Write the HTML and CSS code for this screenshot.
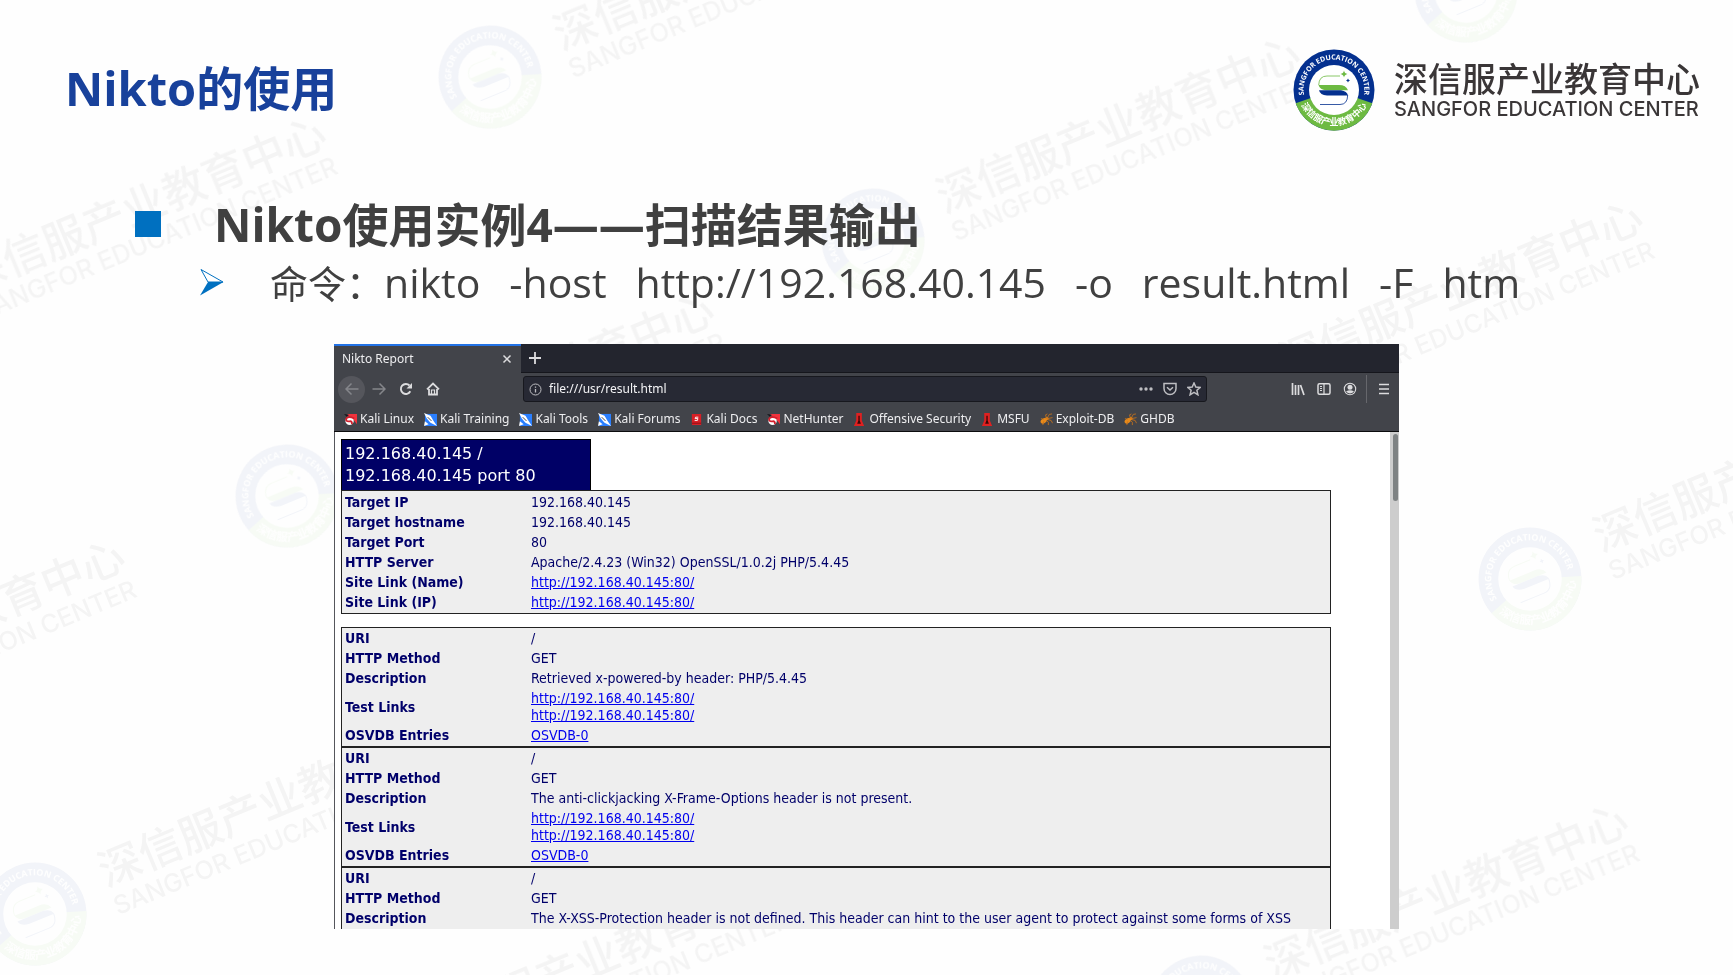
FILE: index.html
```html
<!DOCTYPE html>
<html lang="zh-CN">
<head>
<meta charset="utf-8">
<title>Nikto的使用</title>
<link rel="stylesheet" href="styles.css">
</head>
<body>
<svg class="watermarks" viewBox="0 0 1733 975" preserveAspectRatio="xMidYMid slice" aria-hidden="true">
  <defs>
    <path id="arc-top" d="M12.500 51.500 A30.400 30.400 0 1 1 69.500 51.500"/>
    <path id="arc-bottom" d="M5 46 A36.500 36.500 0 0 0 77 46"/>
    <g id="lockup">
      <circle cx="41" cy="41" r="40.500" fill="#04308f"/>
      <path d="M41 41 L2.700 54.300 A40.500 40.500 0 0 0 79.300 54.300 Z" fill="#6dba42"/>
      <circle cx="41" cy="41" r="25" fill="#fff"/>
      <path d="M47 27 H34 Q26 27 25.700 36" fill="none" stroke="#6dba42" stroke-width=".8"/>
      <path d="M25.500 36 H46 Q53 36 55 41.200 H33 Q27 41 25.500 36 Z" fill="#6dba42"/>
      <path d="M26 41.200 H48 Q54 42 55 46.500 H34 Q27 46 26 41.200 Z" fill="#04308f"/>
      <path d="M54.700 46 Q54.500 55.500 47 55.500 H27" fill="none" stroke="#04308f" stroke-width=".8"/>
      <path d="M51 21.500 Q51.500 24.500 54.500 25 Q51.500 25.500 51 28.500 Q50.500 25.500 47.500 25 Q50.500 24.500 51 21.500 Z" fill="#6dba42"/>
      <path d="M55 29.500 Q55.300 31.200 57 31.500 Q55.300 31.800 55 33.500 Q54.700 31.800 53 31.500 Q54.700 31.200 55 29.500 Z" fill="#04308f"/>
      <text class="ring-en"><textPath href="#arc-top" startOffset="50%">SANGFOR EDUCATION CENTER</textPath></text>
      <text class="ring-cn"><textPath href="#arc-bottom" startOffset="50%">深信服产业教育中心</textPath></text>
      <text class="mark-cn" x="101" y="43">深信服产业教育中心</text>
      <text class="mark-en" x="101" y="67">SANGFOR EDUCATION CENTER</text>
    </g>
    <g id="stamp" transform="rotate(-22.500) scale(1.27) translate(-41 -41)"><use href="#lockup"/></g>
  </defs>
  <g opacity=".05">
    <use href="#stamp" x="490" y="77"/>
    <use href="#stamp" x="873" y="240"/>
    <use href="#stamp" x="1466" y="-9"/>
    <use href="#stamp" x="-101" y="320"/>
    <use href="#stamp" x="287" y="496"/>
    <use href="#stamp" x="1216" y="404"/>
    <use href="#stamp" x="1530" y="579"/>
    <use href="#stamp" x="-302" y="743"/>
    <use href="#stamp" x="35" y="914"/>
    <use href="#stamp" x="352" y="1073"/>
    <use href="#stamp" x="1201" y="1007"/>
  </g>
</svg>

<svg class="sprite" aria-hidden="true">
  <symbol id="i-dragon" viewBox="0 0 14 14">
    <path d="M3 1 H14 V12 L10 7 Z" fill="#f0323c"/><path d="M0 1 L5 2 L3 4 Z" fill="#16161c"/>
    <circle cx="6" cy="8.500" r="4.500" fill="#fff"/><path d="M11 6 Q5 2.500 2.500 6 Q1.500 9.500 6 9 Q9 8.500 8.500 12" fill="none" stroke="#d21f2c" stroke-width="2"/>
  </symbol>
  <symbol id="i-kali" viewBox="0 0 14 14">
    <path d="M1 1 H14 V14 H1 Z" fill="#2a7fff"/><path d="M0 0 L7 3 L10 8 L14 14 L7 10.500 L3 6 Z" fill="#fff"/><path d="M4 4.500 L8 8.500" stroke="#33363f" stroke-width="1"/><path d="M0 14 L1 9 L5 12 Z" fill="#fff"/>
  </symbol>
  <symbol id="i-docs" viewBox="0 0 14 14">
    <path d="M2 1 H12 V13 H3 Q2 13 2 12 Z" fill="#d81f26"/><path d="M2 11 H12" stroke="#8b0d12"/><path d="M9 4.500 H6 L5.500 6 H8.500 L8 8 H5" fill="none" stroke="#fff" stroke-width="1"/>
  </symbol>
  <symbol id="i-tower" viewBox="0 0 14 14">
    <path d="M3.500 0 H9.500 V8 L12 14 H1 L3.500 8 Z" fill="#e02020"/><path d="M5.800 3 H7.200 V8 L8.500 11.500 H4.500 L5.800 8 Z" fill="#3a0606"/>
  </symbol>
  <symbol id="i-spider" viewBox="0 0 14 14">
    <ellipse cx="4" cy="8.500" rx="3.600" ry="2.600" transform="rotate(-35 4 8.500)" fill="#e88a1a"/><circle cx="7.500" cy="6" r="1.800" fill="#e88a1a"/>
    <path d="M7 6 L6 2 L8 1 M7.500 6 L10 1.500 L13 1 M8 6 L13.500 5 M8 7 L12 8 L13.500 11 M6.500 7.500 L9 10 V13 M4 7 L1 6 M4 9 L3 13" fill="none" stroke="#c9731a" stroke-width=".9"/>
  </symbol>
</svg>

<main class="slide">
  <header class="slide-head">
    <h1>Nikto的使用</h1>
    <svg class="brand" viewBox="0 0 410 82" role="img" aria-label="深信服产业教育中心"><use href="#lockup"/></svg>
  </header>

  <section class="points">
    <div class="point"><span class="square"></span><h2>Nikto使用实例4——扫描结果输出</h2></div>
    <div class="subpoint">
      <svg class="arrow" viewBox="0 0 24 28"><path d="M1 1.500 L23 14 L8 14 Z" fill="#fff" stroke="#0070c0" stroke-width="1"/><path d="M0 27.500 L8 14 H23.500 Z" fill="#0070c0"/></svg>
      <p><span><span class="label">命令：</span>nikto</span> <span>-host</span> <span>http://192.168.40.145</span> <span>-o</span> <span>result.html</span> <span>-F</span> <span>htm</span></p>
    </div>
  </section>

  <section class="window">
    <div class="tabs">
      <div class="tab"><span>Nikto Report</span>
        <button class="icon" aria-label="Close tab"><svg width="10" height="10" viewBox="0 0 10 10"><path d="M1.500 1.500 L8.500 8.500 M8.500 1.500 L1.500 8.500"/></svg></button></div>
      <button class="icon plus" aria-label="New tab"><svg width="14" height="14" viewBox="0 0 14 14"><path d="M7 1 V13 M1 7 H13" stroke-width="1.800"/></svg></button>
    </div>

    <div class="toolbar">
      <div class="nav">
        <button class="icon back" aria-label="Back"><svg width="14" height="14" viewBox="0 0 14 14"><path d="M13.500 7 H1 M6.500 1.500 L1 7 L6.500 12.500"/></svg></button>
        <button class="icon dim" aria-label="Forward"><svg width="14" height="14" viewBox="0 0 14 14"><path d="M.5 7 H13 M7.500 1.500 L13 7 L7.500 12.500"/></svg></button>
        <button class="icon" aria-label="Reload"><svg width="14" height="14" viewBox="0 0 14 14"><path d="M11.300 9.300 A5 5 0 1 1 10.500 3.500" stroke-width="1.900"/><path d="M13 1 V6.500 H7.500 Z" fill="#dcdcde" stroke="none"/></svg></button>
        <button class="icon" aria-label="Home"><svg width="14" height="14" viewBox="0 0 14 14"><path d="M1 7.300 L7 1.500 L13 7.300 M3 7 V12.500 H11 V7" stroke-width="1.800"/><path d="M5.500 12.500 V8 H8.500 V12.500" stroke-width="1.200"/></svg></button>
      </div>
      <div class="urlbar">
        <svg class="line info" width="13" height="13" viewBox="0 0 13 13"><circle cx="6.500" cy="6.500" r="5.500" stroke-width="1"/><path d="M6.500 6 V9.500 M6.500 3.400 V4.700" stroke-width="1.300"/></svg>
        <input type="text" value="file:///usr/result.html" aria-label="Address">
        <button class="icon soft" aria-label="Page actions"><svg width="14" height="14" viewBox="0 0 14 14"><g fill="#bebec2" stroke="none"><circle cx="2" cy="7" r="1.700"/><circle cx="7" cy="7" r="1.700"/><circle cx="12" cy="7" r="1.700"/></g></svg></button>
        <button class="icon soft" aria-label="Save to Pocket"><svg width="14" height="14" viewBox="0 0 14 14"><path d="M1 1.500 H13 V6.500 A6 6 0 0 1 1 6.500 Z M4 5.300 L7 8 L10 5.300"/></svg></button>
        <button class="icon soft" aria-label="Bookmark"><svg width="14" height="14" viewBox="0 0 14 14"><path d="M7 1 L8.800 5 L13.200 5.400 L9.900 8.300 L10.900 12.800 L7 10.400 L3.100 12.800 L4.100 8.300 L.8 5.400 L5.200 5 Z"/></svg></button>
      </div>
      <div class="tools">
        <button class="icon" aria-label="Library"><svg width="14" height="14" viewBox="0 0 14 14"><path d="M1.500 1 V13 M4.500 3 V13 M7.500 3 V13 M9.500 3 L13 13" stroke-width="1.700"/></svg></button>
        <button class="icon" aria-label="Sidebars"><svg width="14" height="14" viewBox="0 0 14 14"><rect x="1" y="1.700" width="12" height="10.600" rx="1.500" stroke-width="1.500"/><path d="M7 2 V12 M3 4.500 H5 M3 6.500 H5 M3 8.500 H5" stroke-width="1.200"/></svg></button>
        <button class="icon" aria-label="Account"><svg width="14" height="14" viewBox="0 0 14 14"><circle cx="7" cy="7" r="5.700" stroke-width="1.100"/><circle cx="7" cy="5.300" r="2.500" fill="#dcdcde" stroke="none"/><path d="M3 9.500 Q7 7 11 9.500 Q7 13.500 3 9.500 Z" fill="#dcdcde" stroke="none"/></svg></button>
        <button class="icon menu" aria-label="Menu"><svg width="12" height="12" viewBox="0 0 12 12"><path d="M1 1.500 H11 M1 6 H11 M1 10.500 H11" stroke-width="1.600"/></svg></button>
      </div>
    </div>

    <nav class="bookmarks">
      <a href="#"><svg><use href="#i-dragon"/></svg>Kali Linux</a>
      <a href="#"><svg><use href="#i-kali"/></svg>Kali Training</a>
      <a href="#"><svg><use href="#i-kali"/></svg>Kali Tools</a>
      <a href="#"><svg><use href="#i-kali"/></svg>Kali Forums</a>
      <a href="#"><svg><use href="#i-docs"/></svg>Kali Docs</a>
      <a href="#"><svg><use href="#i-dragon"/></svg>NetHunter</a>
      <a href="#"><svg><use href="#i-tower"/></svg>Offensive Security</a>
      <a href="#"><svg><use href="#i-tower"/></svg>MSFU</a>
      <a href="#"><svg><use href="#i-spider"/></svg>Exploit-DB</a>
      <a href="#"><svg><use href="#i-spider"/></svg>GHDB</a>
    </nav>

    <div class="view">
      <div class="report">
        <h3>192.168.40.145 /<br>192.168.40.145 port 80</h3>
        <table class="host">
          <tr><th scope="row">Target IP</th><td>192.168.40.145</td></tr>
          <tr><th scope="row">Target hostname</th><td>192.168.40.145</td></tr>
          <tr><th scope="row">Target Port</th><td>80</td></tr>
          <tr><th scope="row">HTTP Server</th><td>Apache/2.4.23 (Win32) OpenSSL/1.0.2j PHP/5.4.45</td></tr>
          <tr><th scope="row">Site Link (Name)</th><td><a href="#">http://192.168.40.145:80/</a></td></tr>
          <tr><th scope="row">Site Link (IP)</th><td><a href="#">http://192.168.40.145:80/</a></td></tr>
        </table>
        <table>
          <tr><th scope="row">URI</th><td>/</td></tr>
          <tr><th scope="row">HTTP Method</th><td>GET</td></tr>
          <tr><th scope="row">Description</th><td>Retrieved x-powered-by header: PHP/5.4.45</td></tr>
          <tr><th scope="row">Test Links</th><td><a href="#">http://192.168.40.145:80/</a><br><a href="#">http://192.168.40.145:80/</a></td></tr>
          <tr><th scope="row">OSVDB Entries</th><td><a href="#">OSVDB-0</a></td></tr>
        </table>
        <table>
          <tr><th scope="row">URI</th><td>/</td></tr>
          <tr><th scope="row">HTTP Method</th><td>GET</td></tr>
          <tr><th scope="row">Description</th><td>The anti-clickjacking X-Frame-Options header is not present.</td></tr>
          <tr><th scope="row">Test Links</th><td><a href="#">http://192.168.40.145:80/</a><br><a href="#">http://192.168.40.145:80/</a></td></tr>
          <tr><th scope="row">OSVDB Entries</th><td><a href="#">OSVDB-0</a></td></tr>
        </table>
        <table>
          <tr><th scope="row">URI</th><td>/</td></tr>
          <tr><th scope="row">HTTP Method</th><td>GET</td></tr>
          <tr><th scope="row">Description</th><td>The X-XSS-Protection header is not defined. This header can hint to the user agent to protect against some forms of XSS</td></tr>
        </table>
      </div>
      <div class="scrollbar"><span class="thumb"></span></div>
    </div>
  </section>
</main>
</body>
</html>
```
FILE: styles.css
```css
* { box-sizing: border-box; }

body {
  margin: 0;
  background: #fefefe;
  font-family: "Open Sans", "Noto Sans CJK SC", sans-serif;
  color: #404040;
}

h1, h2, h3, p { margin: 0; }

.watermarks {
  position: absolute;
  inset: 0;
  width: 100%;
  height: 100%;
  z-index: -1;
}

.sprite { position: absolute; width: 0; height: 0; }

.ring-en, .ring-cn { fill: #fff; text-anchor: middle; font-weight: 700; }
.ring-en { font-family: "Open Sans", sans-serif; font-size: 7px; }
.ring-cn { font-family: "Noto Sans CJK SC", sans-serif; font-size: 9px; }
.mark-cn, .mark-en { fill: #3a3637; }
.mark-cn { font-family: "Noto Sans CJK SC", sans-serif; font-size: 34px; font-weight: 500; }
.mark-en { font-family: Inter, sans-serif; font-size: 20px; font-weight: 500; }

.slide {
  display: flex;
  flex-direction: column;
  height: 100vh;
  padding-bottom: 46px;
}

.slide-head {
  display: flex;
  justify-content: space-between;
  align-items: center;
  padding: 49px 30px 0 65px;
}

h1 { padding-bottom: 4px; color: #18419b; font-size: 47px; line-height: 60px; }
.brand { width: 410px; height: 82px; }

.points { padding: 63px 0 34px 135px; }

.point, .subpoint { display: flex; align-items: center; }
.point { gap: 53px; }
.square { width: 26px; height: 26px; background: #0070c0; }
h2 { font-size: 46px; line-height: 60px; }

.subpoint { gap: 46px; padding-left: 65px; }
.arrow { width: 24px; height: 28px; }
.subpoint p { display: flex; gap: 29px; font-size: 41px; line-height: 56px; white-space: nowrap; }
.label { font-size: 38px; line-height: 1; }

.window {
  display: flex;
  flex-direction: column;
  flex: 1;
  min-height: 0;
  margin: 0 334px;
  background: #42444a;
  color: #eeeef0;
  font: 12px/18px "Noto Sans", sans-serif;
}

.icon {
  display: flex;
  align-items: center;
  justify-content: center;
  padding: 0;
  border: 0;
  background: none;
}

.icon svg, .line { fill: none; stroke: #dcdcde; stroke-width: 1.5; }
.soft svg, .info { stroke: #bebec2; }
.dim svg, .back svg { stroke: #85868b; }

.tabs {
  display: flex;
  height: 29px;
  background: #23252e;
  border-bottom: 1px solid #15161c;
}

.tab {
  display: flex;
  align-items: center;
  justify-content: space-between;
  width: 187px;
  height: 29px;
  padding: 0 9px 2px 8px;
  background: #42444a;
  border-top: 2px solid #2373e6;
}

.plus { width: 28px; }

.toolbar {
  display: flex;
  align-items: center;
  height: 32px;
  padding: 0 9px 0 4px;
}

.nav { display: flex; gap: 13px; align-items: center; width: 185px; }
.back { width: 27px; height: 27px; margin-right: -6px; border-radius: 50%; background: #55565c; }

.urlbar {
  display: flex;
  align-items: center;
  gap: 10px;
  flex: 1;
  height: 26px;
  padding: 0 5px;
  border: 1px solid #17181e;
  border-radius: 3px;
  background: #272934;
}

.urlbar input {
  flex: 1;
  min-width: 0;
  margin-left: -3px;
  padding: 0;
  border: 0;
  outline: 0;
  background: none;
  color: #f4f4f6;
  font: inherit;
}

.tools { display: flex; align-items: center; gap: 12px; padding-left: 84px; }
.menu { height: 28px; margin-left: -3px; padding-left: 11px; border-left: 1px solid #66676c; }

.bookmarks {
  display: flex;
  align-items: center;
  gap: 10px;
  height: 27px;
  padding: 2px 0 0 10px;
  border-bottom: 1px solid #0c0c0d;
}

.bookmarks a {
  display: flex;
  align-items: center;
  gap: 3px;
  color: inherit;
  text-decoration: none;
  white-space: nowrap;
}

.bookmarks svg { width: 13px; height: 13px; }

.view {
  display: flex;
  flex: 1;
  min-height: 0;
  border-left: 1px solid #55565c;
  background: #fff;
}

.report {
  flex: 1;
  overflow: hidden;
  padding: 7px 59px 0 6px;
  color: #00006a;
  font: 14px/17px "DejaVu Sans Condensed", "DejaVu Sans", sans-serif;
}

h3 {
  width: 250px;
  padding: 3px;
  border: 1px solid #000;
  border-bottom: 0;
  background: #000066;
  color: #fff;
  font: 16px/22px "DejaVu Sans", sans-serif;
}

table {
  width: 100%;
  padding-top: 1px;
  border: 1px solid #222;
  border-spacing: 0;
  background: #eee;
}

.host { margin-bottom: 13px; padding-top: 2px; }
th, td { padding: 1px 3px 2px; text-align: left; vertical-align: middle; }
th { width: 186px; }
td a { color: #0000ee; }

.scrollbar { width: 9px; padding: 2px 1px 0 3px; background: #cdcdcd; }
.thumb { display: block; height: 67px; border-radius: 3px; background: #7e8283; }
```
